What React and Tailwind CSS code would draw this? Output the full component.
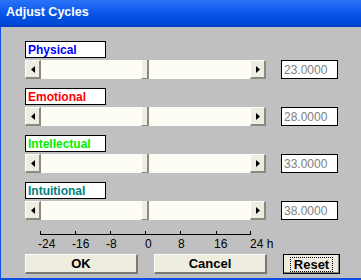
import React from 'react';

const rows = [
  { label: 'Physical', color: 'text-[#0000ff]', value: '23.0000' },
  { label: 'Emotional', color: 'text-[#ff0000]', value: '28.0000' },
  { label: 'Intellectual', color: 'text-[#00ee00]', value: '33.0000' },
  { label: 'Intuitional', color: 'text-[#008080]', value: '38.0000' },
];

const ticks = [
  { x: 15, label: '-24', lx: 13 },
  { x: 50, label: '-16', lx: 47 },
  { x: 85, label: '-8', lx: 81 },
  { x: 120, label: '0', lx: 120 },
  { x: 155, label: '8', lx: 153 },
  { x: 191, label: '16', lx: 189 },
  { x: 225, label: '24 h', lx: 225 },
];

const Arrow = ({ dir }) => (
  <svg width="4" height="7" viewBox="0 0 4 7">
    {dir === 'left' ? <path d="M4 0 L0 3.5 L4 7 Z" fill="#000" /> : <path d="M0 0 L4 3.5 L0 7 Z" fill="#000" />}
  </svg>
);

const ScrollButton = ({ dir }) => (
  <div className="w-[16px] h-full flex items-center justify-center bg-[#efece0] border-t border-l border-t-white border-l-white border-b-2 border-r-2 border-b-[#8a8a80] border-r-[#8a8a80]">
    <Arrow dir={dir} />
  </div>
);

const ScrollBar = () => (
  <div className="w-[241px] h-[19px] flex bg-[#fdfdf6]">
    <ScrollButton dir="left" />
    <div className="w-[100px]" />
    <div className="w-[8px] h-full bg-[#efece0] border-l border-l-white border-r-2 border-r-[#8a8a80] border-b border-b-[#8a8a80]" />
    <div className="flex-1" />
    <ScrollButton dir="right" />
  </div>
);

const Button = ({ children, width, focused }) => (
  <div
    className={`${width} h-[20px] flex items-center justify-center bg-[#efece0] text-[13px] font-bold text-black ${
      focused
        ? 'border border-black shadow-[inset_-1px_-1px_0_#808080]'
        : 'border-t border-l border-t-white border-l-white border-b-2 border-r-2 border-b-[#7a7a72] border-r-[#7a7a72]'
    }`}
  >
    {focused ? (
      <span className="px-[3px] leading-[13px] border border-dotted border-black">{children}</span>
    ) : (
      children
    )}
  </div>
);

export default function App() {
  return (
    <div
      className="w-[361px] h-[280px] flex flex-col bg-[#c0c0c0] overflow-hidden"
      style={{ fontFamily: '"Liberation Sans", Arial, sans-serif' }}
    >
      <div className="h-[27px] shrink-0 flex items-center pl-[6px] bg-gradient-to-b from-[#2a72f6] via-[#0a58ec] to-[#0046d4] border-b-2 border-b-[#0040c8]">
        <span className="text-white font-bold text-[12.5px]">Adjust Cycles</span>
      </div>
      <div className="flex-1 flex flex-col pl-[24px] pt-[14px] border-l border-l-[#0a50e8] border-b-2 border-b-[#0a50e8]">
        <div className="flex flex-col gap-[9px]">
          {rows.map((r) => (
            <div key={r.label} className="flex flex-col gap-[2px]">
              <div className={`w-[81px] h-[17px] bg-white border border-black flex items-center pl-[2px] text-[12px] font-bold ${r.color}`}>
                {r.label}
              </div>
              <div className="flex items-center gap-[15px]">
                <ScrollBar />
                <div className="w-[57px] h-[19px] bg-white border border-black flex items-center pl-[2px] text-[12px] text-[#808080]">
                  {r.value}
                </div>
              </div>
            </div>
          ))}
        </div>
        <div className="relative w-[260px] h-[27px] mt-[6px]">
          <div className="absolute left-[15px] top-[8px] w-[211px] h-px bg-black" />
          {ticks.map((t) => (
            <div key={t.label} className="absolute top-[5px] w-px h-[4px] bg-black" style={{ left: t.x }} />
          ))}
          {ticks.map((t) => (
            <span key={t.label} className="absolute top-[11px] text-[12px] leading-[14px] text-black" style={{ left: t.lx }}>
              {t.label}
            </span>
          ))}
        </div>
        <div className="flex gap-[16px] mt-[1px]">
          <Button width="w-[113px]">OK</Button>
          <Button width="w-[113px]">Cancel</Button>
          <Button width="w-[57px]" focused>Reset</Button>
        </div>
      </div>
    </div>
  );
}
